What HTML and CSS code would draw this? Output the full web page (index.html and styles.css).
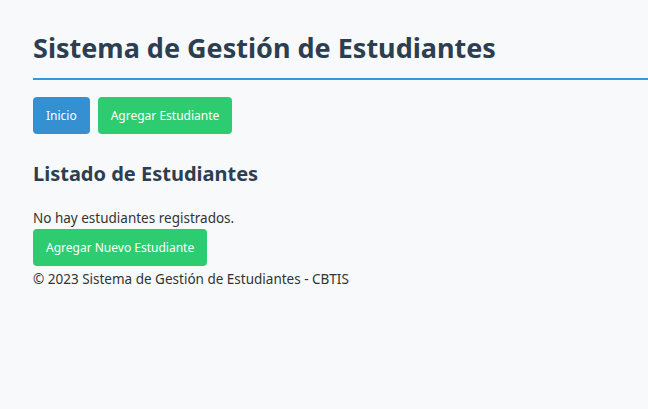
FILE: index.html
```html
<!DOCTYPE html>
<html lang="es">
<head>
<meta charset="utf-8">
<title>Sistema de Gestión de Estudiantes</title>
<link rel="stylesheet" href="styles.css">
</head>
<body>
<div class="container">
  <header class="page-header">
    <h1>Sistema de Gestión de Estudiantes</h1>
  </header>
  <nav class="nav">
    <a class="btn btn-primary" href="#">Inicio</a>
    <a class="btn btn-success" href="#">Agregar Estudiante</a>
  </nav>
  <main>
    <h2>Listado de Estudiantes</h2>
    <p class="empty">No hay estudiantes registrados.</p>
    <a class="btn btn-success" href="#">Agregar Nuevo Estudiante</a>
  </main>
  <footer class="footer">© 2023 Sistema de Gestión de Estudiantes - CBTIS</footer>
</div>
</body>
</html>
```
FILE: styles.css
```css
html, body {
  margin: 0;
  padding: 0;
  background: #f8f9fa;
}
body {
  font-family: "Noto Sans", "Open Sans", sans-serif;
  font-size: 13.5px;
  color: #333;
}
.container {
  padding: 20px 0 20px 33px;
}
.page-header {
  border-bottom: 2px solid #3498db;
  padding-bottom: 12px;
  margin-bottom: 17px;
}
h1 {
  margin: 0;
  padding-top: 10px;
  font-size: 27px;
  font-weight: 700;
  color: #2c3e50;
  line-height: 36px;
}
.nav {
  display: flex;
  gap: 8px;
}
.btn {
  display: inline-block;
  padding: 0 13px;
  height: 37px;
  line-height: 37px;
  border-radius: 4px;
  color: #fff;
  text-decoration: none;
  font-size: 12px;
}
.btn-primary { background: #3490d0; }
.btn-success { background: #2ecc71; }
h2 {
  margin: 27px 0 22px;
  font-size: 20px;
  font-weight: 700;
  color: #2c3e50;
  line-height: 26px;
}
.empty {
  margin: 0 0 2px;
  line-height: 18px;
}
.footer {
  margin-top: 4px;
  line-height: 18px;
}
```
